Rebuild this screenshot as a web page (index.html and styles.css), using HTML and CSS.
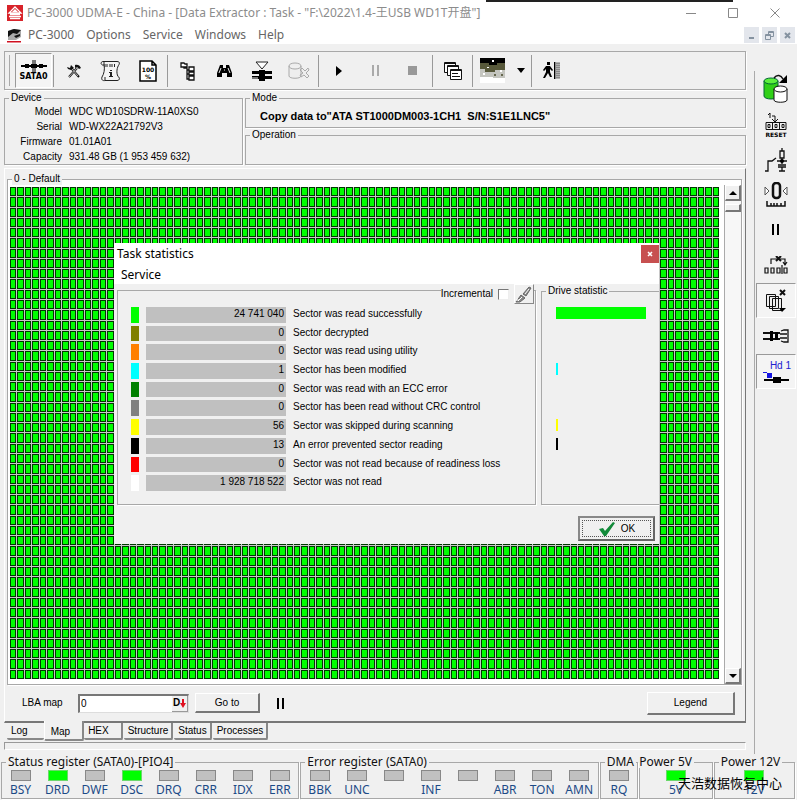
FILE: index.html
```html
<!DOCTYPE html>
<html lang="en">
<head>
    <meta charset="UTF-8">
    <meta name="viewport" content="width=device-width, initial-scale=1.0">
    <title>PC-3000 UDMA-E</title>
    <link rel="stylesheet" href="styles.css">
</head>
<body>
<div class="window">
  <header class="titlebar">
    <div class="behind"></div>
    <svg width="16" height="16" viewBox="0 0 16 16"><path fill="#d8232a" d="M0 0h16v16H0z"/><path d="M8 2l6 6H2zM3 9.500h10M2 11.500h12M3 13.500h10" fill="none" stroke="#fff" stroke-width="1.300"/><path d="M8 4l3 3H5z" fill="#fff"/></svg>
    <h1>PC-3000 UDMA-E - China - [Data Extractor : Task - "F:\2022\1.4-王USB WD1T开盘"]</h1>
    <div class="win-buttons">
      <button aria-label="Minimize"><svg width="10" height="10"><path d="M0 5.500h10"/></svg></button>
      <button aria-label="Maximize"><svg width="10" height="10"><path d="M.5.5h9v9h-9z"/></svg></button>
      <button aria-label="Close"><svg width="10" height="10"><path d="M.5.5l9 9M9.500.5l-9 9"/></svg></button>
    </div>
  </header>

  <nav class="menubar">
    <svg width="15" height="15" viewBox="0 0 15 15"><path fill="#aaa" d="M1 3l5-2 8 1v7l-5 3H1z"/><path d="M1 3l6-2 7 1-4 4-4-1-5 4zM7 8l6-2v2l-4 2z" fill="#111"/><path fill="#d01020" d="M0 13h14v1.500H0z"/></svg>
    <button>PC-3000</button>
    <button>Options</button>
    <button>Service</button>
    <button>Windows</button>
    <button>Help</button>
    <div class="mdi-buttons">
      <button aria-label="Minimize child"><svg width="9" height="9"><path d="M2 7h5"/></svg></button>
      <button aria-label="Restore child"><svg width="9" height="9"><path class="thin" d="M3.500 3V.5h5v5H6M3 1.500h5M.5 3.500h5v5h-5zM1 4.500h4"/></svg></button>
      <button aria-label="Close child"><svg width="9" height="9"><path d="M2 2l5 5M7 2L2 7"/></svg></button>
    </div>
  </nav>

  <div class="workspace">
    <main>
      <div class="toolbar">
        <button class="pressed sata" aria-label="SATA0"><svg width="26" height="12" viewBox="0 0 26 12"><path d="M0 5h26v2H0z"/><path d="M4 4h4v4H4zM18 4h4v4h-4z"/><path fill="#777" d="M11 0h4v12h-4z"/><path d="M10 4h6v4h-6z"/></svg><span>SATA0</span></button>
        <i class="sep"></i>
        <button aria-label="Tools"><svg width="16" height="16" viewBox="0 0 16 16"><path d="M3 14L11 5M13 14L5 5" stroke="#111" stroke-width="2"/><path d="M9 2c2-1 5 0 6 3l-2 1-2-2-2 1zM1 4l3 1 1-3 3 3-3 2-3-1z" fill="#111"/><path d="M3 14l8-9M12 13L6 6" stroke="#ddd" stroke-width=".8"/></svg></button>
        <button aria-label="Sector info"><svg width="22" height="22" viewBox="0 0 22 22"><path d="M4 1.500C1 1 0 4 2.500 5H4c1 4 0 9-2 12-1 3 1 4 3 3.500h12c3 0 3-3 1-4-2-4-1-9 1-12 1-2 0-3-2-3zM4 1.500v3.500M5 17v3" fill="#f4f4f4" stroke="#222"/><path d="M5 4v3M7 4v3M10 4v3M12 4v3M14.500 4v3" stroke="#222"/><path d="M10 10h2v1h-2zM9 12h3v4h1v1H9v-1h1v-3H9z" fill="#222"/></svg></button>
        <button aria-label="Progress"><svg width="18" height="22" viewBox="0 0 18 22"><path d="M1 1h12l4 4v16H1zM13 1v4h4" fill="#fff" stroke="#000" stroke-width="1.500"/><text x="9" y="12" class="svg-small">100</text><text x="9" y="19" class="svg-small">%</text></svg></button>
        <i class="sep"></i>
        <button aria-label="Folder tree"><svg width="16" height="20" viewBox="0 0 16 20"><path d="M1 2h3l1 1h2v3H1zM4 6v1h3v11h2M7 9h2M7 13h2M9 6h5v4H9zM9 11h5v3H9zM9 15h5v4H9z" fill="#fff" stroke="#111" stroke-width="1.300"/></svg></button>
        <button aria-label="Find"><svg width="15" height="14" viewBox="0 0 15 14"><path d="M3 1h3v3h3V1h3l3 8v4h-5V9H5v4H0V9z"/><path d="M4 4L2 9M11 4l2 5M7 6h1" stroke="#eee"/></svg></button>
        <button aria-label="Build map"><svg width="22" height="20" viewBox="0 0 22 20"><path d="M5 1h12l-6 7z" fill="#fff" stroke="#222"/><path d="M1 10h20v3H1zM1 15h20v3H1zM8 9h6v11H8z"/><path d="M1 13.500h7M14 13.500h7M1 17h6" stroke="#eee"/></svg></button>
        <button disabled aria-label="Remove drive"><svg width="22" height="18" viewBox="0 0 22 18"><path d="M1 4v10c0 3 12 3 12 0V4M1 4c0-4 12-4 12 0S1 8 1 4M14 6l3 3 3-3 1 2-3 3 3 3-2 2-3-3-3 2-1-2 3-2-3-3z" fill="#eee" stroke="#aaa"/></svg></button>
        <i class="sep"></i>
        <button aria-label="Start"><svg width="8" height="12"><path d="M1 1l6 5-6 5z"/></svg></button>
        <button disabled aria-label="Pause"><svg width="8" height="11"><path fill="#aaa" d="M0 0h2v11H0zM5 0h2v11H5z"/></svg></button>
        <button disabled aria-label="Stop"><svg width="9" height="9"><path fill="#999" d="M0 0h9v9H0z"/></svg></button>
        <i class="sep"></i>
        <button aria-label="Cascade windows"><svg width="20" height="20" viewBox="0 0 20 20"><g fill="#fff" stroke="#111"><path d="M1.500 1.500h11v10h-11z"/><path d="M1 2.500h12"/><path d="M4.500 4.500h11v10h-11z"/><path d="M4 5.500h12"/><path d="M7.500 8.500h11v10h-11z"/><path d="M7 9.500h12M9 12.500h6M9 15.500h8"/></g></svg></button>
        <i class="sep"></i>
        <button aria-label="Map view"><svg width="25" height="25" viewBox="0 0 25 25"><path d="M0 0h25v7H0z"/><path fill="#57583a" d="M0 5h9v2h8V5h8v9H0z"/><path fill="#c4c5bf" d="M0 11h5v3h10v-2h10v8H0z"/><path fill="#fff" d="M0 19h13v1h12v5H0zM12 2h2v2h-2zM7 9h2v1H7zM20 12h2v2h-2zM3 15h2v2H3z"/><path fill="#66674e" d="M14 16h2v2h-2zM21 16h2v2h-2z"/></svg></button>
        <button class="drop" aria-label="Map view options"><svg width="8" height="5"><path d="M0 0h8L4 5z"/></svg></button>
        <i class="sep"></i>
        <button aria-label="Exit"><svg width="18" height="18" viewBox="0 0 18 18"><path d="M4 0h3v3H4zM3 4h4l3 4-1 1-2-2v3l2 5H7l-2-4-3 5H0l3-6V7L1 9 0 8z"/><path fill="#888" d="M11 0h6v17h-6z"/><path d="M11.500 0v17" stroke="#000"/><path d="M14 0v17M16 0v17" stroke="#ddd" stroke-dasharray="1 1"/></svg></button>
      </div>

      <div class="info">
        <fieldset class="device">
          <legend>Device</legend>
          <dl>
            <dt>Model</dt><dd>WDC WD10SDRW-11A0XS0</dd>
            <dt>Serial</dt><dd>WD-WX22A21792V3</dd>
            <dt>Firmware</dt><dd>01.01A01</dd>
            <dt>Capacity</dt><dd>931.48 GB (1 953 459 632)</dd>
          </dl>
        </fieldset>
        <div class="info-right">
          <fieldset>
            <legend>Mode</legend>
            <p class="mode">Copy data to"ATA ST1000DM003-1CH1  S/N:S1E1LNC5"</p>
          </fieldset>
          <fieldset><legend>Operation</legend></fieldset>
        </div>
      </div>

      <section class="panel">
        <fieldset class="map-box">
          <legend>0 - Default</legend>
          <div class="map" id="map"></div>
          <div class="scrollbar">
            <button aria-label="Scroll up"><svg width="8" height="4"><path d="M4 0l4 4H0z"/></svg></button>
            <div class="thumb"></div>
            <button class="down" aria-label="Scroll down"><svg width="8" height="4"><path d="M0 0h8L4 4z"/></svg></button>
          </div>
        </fieldset>
        <div class="lba">
          <label for="lba">LBA map</label>
          <div class="lba-field">
            <input id="lba" type="text" value="0">
            <button aria-label="Decimal"><b>D</b><svg width="6" height="9"><path fill="#e01020" d="M2 0h2v4h2L3 9 0 4h2z"/></svg></button>
          </div>
          <button class="btn goto">Go to</button>
          <button class="pause" aria-label="Pause map"><svg width="8" height="11"><path d="M0 0h2v11H0zM5 0h2v11H5z"/></svg></button>
          <button class="btn legend-btn">Legend</button>
        </div>
      </section>

      <div class="tabs">
        <button>Log</button>
        <button class="active">Map</button>
        <button>HEX</button>
        <button>Structure</button>
        <button>Status</button>
        <button>Processes</button>
      </div>
      <div class="strip"></div>
    </main>

    <aside class="side">
      <button aria-label="Copy drive"><svg width="26" height="30" viewBox="0 0 26 30"><path d="M1 7v15c0 4 14 4 14 0V7" fill="#30d018" stroke="#063"/><ellipse cx="8" cy="7" rx="7" ry="3" fill="#5cf03c" stroke="#063"/><path d="M11 15v11c0 3 13 3 13 0V15" fill="#fff" stroke="#111"/><ellipse cx="17.500" cy="15" rx="6.500" ry="3" fill="#fff" stroke="#111"/><path d="M11 4c3-4 7-3 9 1" fill="none" stroke="#111" stroke-width="1.500"/><path d="M24 1v8h-8z"/></svg></button>
      <button aria-label="Reset"><svg width="22" height="26" viewBox="0 0 22 26"><path d="M3 3l2-2v5M7 4h3v5M7 7l3 3 3-3M1 10.500h20v7H1zM7.500 10v7M14.500 10v7" fill="none" stroke="#111"/><path d="M3 12.500h2v3H3zM10 12.500h2v3h-2zM17 12.500h2v3h-2z" fill="none" stroke="#111"/><text x="11" y="25" class="svg-small">RESET</text></svg></button>
      <button aria-label="Power"><svg width="24" height="24" viewBox="0 0 24 24"><path d="M1 23h3V13h4l4-3M13 13h10M18 0v3M16 3h4v7h-4zM18 10v6M14 17h8M14 19h8M18 19v4M15 23h6" fill="none" stroke="#111" stroke-width="1.300"/><circle cx="18" cy="13" r="2"/></svg></button>
      <button aria-label="Zero position"><svg width="24" height="26" viewBox="0 0 24 26"><rect x="9" y="1" width="7" height="15" rx="3" fill="none" stroke="#111" stroke-width="2.500"/><path d="M1 5l4 4-4 4zM23 5l-4 4 4 4z" fill="#fff" stroke="#555"/><path d="M3 19v5h18v-5M7 21v3M10 21v3M13 21v3M17 21v3" fill="none" stroke="#111" stroke-width="1.500"/></svg></button>
      <button aria-label="Pause task"><svg width="8" height="11"><path d="M0 0h2v11H0zM5 0h2v11H5z"/></svg></button>
      <button aria-label="Skip sectors"><svg width="24" height="18" viewBox="0 0 24 18"><path d="M7 8V3h14v5M19 6l2 3 2-3M1 12h3v5H1zM7 12h3v5H7zM13 12h3v5h-3zM20 12h3v5h-3zM18 9v9" fill="none" stroke="#111" stroke-width="1.200"/><path d="M12 0l5 5M17 0l-5 5" stroke="#111" stroke-width="2"/></svg></button>
      <button class="pressed" aria-label="Clear copies"><svg width="22" height="24" viewBox="0 0 22 24"><path d="M1.500 5.500h9v12h-9zM4.500 7.500h9v12h-9zM7.500 9.500h9v12h-9z" fill="#eee" stroke="#111"/><path d="M15 1l5 5M20 1l-5 5" stroke="#111" stroke-width="2"/><path d="M14 19h7l-4 4z"/></svg></button>
      <button aria-label="Connector"><svg width="26" height="14" viewBox="0 0 26 14"><path d="M0 4h17M0 10h17" stroke="#111" stroke-width="2"/><path d="M7 2h3v10H7zM12 3h3v8h-3z"/><path d="M17 5h7M17 9h7M18 2l3-1h4v12h-4l-3-1" fill="none" stroke="#111" stroke-width="1.300"/></svg></button>
      <button class="pressed hd" aria-label="Head 1"><span>Hd 1</span><svg width="26" height="12" viewBox="0 0 26 12"><path fill="#1414e0" d="M4 1h5v5H4zM0 0h4v1H0z"/><path d="M1 7h25v2H1zM10 5h8v6h-8z"/></svg></button>
    </aside>
  </div>

  <footer class="registers">
    <fieldset class="reg wide">
      <legend>Status register (SATA0)-[PIO4]</legend>
      <div><i></i>BSY</div><div><i class="on"></i>DRD</div><div><i></i>DWF</div><div><i class="on"></i>DSC</div>
      <div><i></i>DRQ</div><div><i></i>CRR</div><div><i></i>IDX</div><div><i></i>ERR</div>
    </fieldset>
    <fieldset class="reg wide">
      <legend>Error register (SATA0)</legend>
      <div><i></i>BBK</div><div><i></i>UNC</div><div><i></i></div><div><i></i>INF</div>
      <div><i></i></div><div><i></i>ABR</div><div><i></i>TON</div><div><i></i>AMN</div>
    </fieldset>
    <fieldset class="reg dma">
      <legend>DMA</legend>
      <div><i></i>RQ</div>
    </fieldset>
    <fieldset class="reg power5">
      <legend>Power 5V</legend>
      <div><i class="on"></i>5V</div>
    </fieldset>
    <fieldset class="reg power12">
      <legend>Power 12V</legend>
      <div><i class="on"></i>12V</div>
    </fieldset>
    <span class="watermark">天浩数据恢复中心</span>
  </footer>

  <!-- Task statistics dialog -->
  <div class="dialog" role="dialog" aria-labelledby="dlg-title">
    <div class="dialog-title">
      <h2 id="dlg-title">Task statistics</h2>
      <button aria-label="Close dialog"><svg width="6" height="6"><path d="M1 1l4 4M5 1L1 5" stroke="#fff" stroke-width="1.500"/></svg></button>
    </div>
    <div class="dialog-menu"><button>Service</button></div>
    <div class="dialog-body">
      <fieldset class="stats">
        <div class="incremental">
          <label for="inc">Incremental</label>
          <input id="inc" type="checkbox">
          <button aria-label="Clear statistics"><svg width="17" height="17" viewBox="0 0 17 17"><path d="M1 16l5-7 4 3-5 4zM8 8l6-7 2 1-5 8z" fill="#888" stroke="#666"/><path d="M3 15l4-4M10 8l4-5M1 14h3M5 17h3" stroke="#fff"/></svg></button>
        </div>
        <div class="row"><i class="lime"></i><output>24 741 040</output><span>Sector was read successfully</span></div>
        <div class="row"><i class="olive"></i><output>0</output><span>Sector decrypted</span></div>
        <div class="row"><i class="orange"></i><output>0</output><span>Sector was read using utility</span></div>
        <div class="row"><i class="cyan"></i><output>1</output><span>Sector has been modified</span></div>
        <div class="row"><i class="green"></i><output>0</output><span>Sector was read with an ECC error</span></div>
        <div class="row"><i class="gray"></i><output>0</output><span>Sector has been read without CRC control</span></div>
        <div class="row"><i class="yellow"></i><output>56</output><span>Sector was skipped during scanning</span></div>
        <div class="row"><i class="black"></i><output>13</output><span>An error prevented sector reading</span></div>
        <div class="row"><i class="red"></i><output>0</output><span>Sector was not read because of readiness loss</span></div>
        <div class="row"><i class="white"></i><output>1 928 718 522</output><span>Sector was not read</span></div>
      </fieldset>
      <fieldset class="drive">
        <legend>Drive statistic</legend>
        <div class="bars">
          <i class="lime" style="width:100%"></i><i></i><i></i><i class="cyan" style="width:2%"></i><i></i>
          <i></i><i class="yellow" style="width:2%"></i><i class="black" style="width:2%"></i><i></i><i></i>
        </div>
      </fieldset>
    </div>
    <div class="dialog-actions">
      <button class="ok"><svg width="18" height="16" viewBox="0 0 18 16"><path d="M1 8l4-1 2 3L15 1l2 1L8 15H6z" fill="#128a3a"/></svg>OK</button>
    </div>
  </div>
</div>
<script src="map.js"></script>
</body>
</html>
```

FILE: styles.css
```css
* { margin: 0; padding: 0; box-sizing: border-box; }

body {
    font-family: "Liberation Sans", Arial, "Noto Sans CJK SC", sans-serif;
    font-size: 10px;
    line-height: 12px;
    color: #000;
    background-color: #f0f0f0;
}

button, input { font: inherit; color: inherit; }
button { background: none; border: none; }
i { display: block; }
svg { flex: none; display: block; }

fieldset {
    min-width: 0;
    border: 1px solid #a8a8a8;
    box-shadow: 1px 1px 0 #fff;
}

legend {
    margin-left: 4px;
    padding: 0 2px;
}

.window {
    position: relative;
    display: flex;
    flex-direction: column;
    height: 100vh;
    overflow: hidden;
}

/* Title bar */
.titlebar {
    position: relative;
    display: flex;
    align-items: center;
    height: 26px;
    padding: 0 17px 0 7px;
    background-color: #fff;
    font-family: "Noto Sans", "Noto Sans CJK SC", sans-serif;
    color: #8c8c8c;
}

.titlebar h1 {
    margin-left: 4px;
    font-size: 12px;
    font-weight: normal;
    white-space: nowrap;
}

.behind {
    position: absolute;
    top: 0;
    left: 61%;
    width: 31%;
    height: 2px;
    background-color: #222;
}

.win-buttons { display: flex; gap: 32px; margin-left: auto; }
.win-buttons path { fill: none; stroke: #888; }

/* Menu */
.menubar {
    display: flex;
    align-items: center;
    gap: 12px;
    height: 18px;
    padding: 0 2px 0 7px;
    background-color: #fff;
    font-family: "Noto Sans", sans-serif;
    font-size: 12px;
    color: #666;
}

.menubar > svg { margin-right: -6px; }
.mdi-buttons { display: flex; gap: 3px; margin-left: auto; }

.mdi-buttons button {
    display: grid;
    place-items: center;
    width: 15px;
    height: 16px;
    background-color: #e3e6ec;
}

.mdi-buttons path { fill: none; stroke: #8592a0; stroke-width: 2; }
.mdi-buttons .thin { stroke-width: 1; }

.workspace { flex: 1; display: flex; min-height: 0; }

main {
    flex: 1;
    display: flex;
    flex-direction: column;
    min-width: 0;
    padding: 7px 8px 0 4px;
}

/* Toolbar */
.toolbar {
    display: flex;
    align-items: center;
    height: 39px;
    padding-left: 10px;
    border: 1px solid #a8a8a8;
    box-shadow: 1px 1px 0 #fff;
    position: relative;
}

.toolbar::before {
    content: "";
    position: absolute;
    left: 4px;
    top: 3px;
    bottom: 3px;
    border-left: 1px solid #aaa;
}

.toolbar button {
    display: flex;
    flex-direction: column;
    align-items: center;
    justify-content: center;
    width: 37px;
    height: 35px;
}

.toolbar .drop { width: 19px; }

.sep {
    width: 1px;
    height: 32px;
    margin: 0 1px;
    background-color: #999;
}

.toolbar .pressed, .side .pressed {
    background-color: #f4f4f4;
    border: 1px solid;
    border-color: #999 #fff #fff #999;
}

.sata span {
    font-family: "DejaVu Sans", sans-serif;
    font-size: 8px;
    line-height: 10px;
    font-weight: bold;
}

.svg-small {
    font-family: "DejaVu Sans", sans-serif;
    font-size: 6px;
    font-weight: bold;
    text-anchor: middle;
}

/* Device info */
.info { display: flex; gap: 2px; height: 73px; margin-top: 2px; }
.device { flex: 0 0 239px; }

.device dl {
    display: grid;
    grid-template-columns: 57px 1fr;
    column-gap: 7px;
    line-height: 15px;
}

.device dt { text-align: right; }

.info-right {
    flex: 1;
    display: grid;
    grid-template-rows: 1fr 1fr;
    gap: 1px;
}

.mode {
    padding: 6px 0 0 14px;
    font-size: 11px;
    font-weight: bold;
    white-space: pre;
}

/* Map panel */
.panel {
    flex: 1;
    display: flex;
    flex-direction: column;
    min-height: 0;
    margin-top: 3px;
    padding: 4px 3px 0 2px;
    border: 1px solid;
    border-color: #fff #777 #777 #fff;
    border-bottom-width: 2px;
}

.map-box {
    flex: 1;
    display: flex;
    gap: 5px;
    min-height: 0;
    background-color: #fff;
}

.map-box legend {
    background-color: #f0f0f0;
}

.map {
    flex: 1;
    display: grid;
    grid-template-columns: repeat(95, 1fr);
    grid-template-rows: repeat(48, 1fr);
    gap: 1px;
    margin: 2px 0 5px 2px;
    background-color: #c8c8c8;
}

.map i {
    background-color: #00ff00;
    border: 1px solid #003800;
}

.scrollbar {
    display: flex;
    flex-direction: column;
    width: 17px;
    background-color: #f7f7f7;
    border-left: 1px solid #aaa;
}

.scrollbar button, .thumb {
    display: grid;
    place-items: center;
    height: 16px;
    background-color: #f0f0f0;
    border: 1px solid;
    border-color: #fff #777 #777 #fff;
    border-right-width: 2px;
    border-bottom-width: 2px;
}

.scrollbar .thumb { height: 8px; margin-top: 3px; }
.scrollbar .down { margin-top: auto; }

.lba {
    display: flex;
    align-items: center;
    height: 36px;
    padding: 0 7px 0 15px;
}

.lba label { width: 40px; white-space: nowrap; }

.lba-field {
    display: flex;
    width: 111px;
    height: 19px;
    margin: 0 6px 0 16px;
    background-color: #fff;
    border: 1px solid;
    border-color: #777 #ddd #ddd #777;
    border-width: 2px 1px 1px 2px;
}

.lba-field input {
    flex: 1;
    min-width: 0;
    padding-left: 1px;
    border: none;
    background: none;
    outline: none;
}

.lba-field button {
    display: flex;
    align-items: center;
    width: 16px;
    padding-left: 1px;
    background-color: #f0f0f0;
    border: 1px solid #999;
    border-width: 0 1px 1px 0;
}

.btn {
    height: 20px;
    background-color: #f0f0f0;
    border: 1px solid;
    border-color: #fff #777 #777 #fff;
    border-right-width: 2px;
    border-bottom-width: 2px;
}

.goto { width: 65px; }
.pause { margin-left: 17px; }
.legend-btn { width: 88px; height: 23px; margin-left: auto; }

/* Tabs */
.tabs {
    display: flex;
    gap: 1px;
    height: 19px;
    padding-left: 3px;
}

.tabs button {
    height: 17px;
    padding: 0 3px 0 4px;
    border-right: 2px solid #888;
    border-bottom: 2px solid #888;
    border-radius: 0 0 2px 2px;
}

.tabs button:first-child { padding-right: 16px; border-right: none; }

.tabs .active {
    height: 20px;
    margin: -2px -1px 0 -1px;
    padding: 4px 12px 0 6px;
    border-left: 1px solid #fff;
    background-color: #f0f0f0;
}

.tabs button:nth-child(3) { padding-right: 12px; }

.strip {
    height: 8px;
    margin-bottom: 6px;
    border: 1px solid;
    border-color: #999 #fff #fff #999;
}

/* Right toolbar */
.side {
    flex: 0 0 43px;
    margin: 27px 0 2px;
    border-left: 1px solid #aaa;
    padding-left: 1px;
}

.side button {
    display: flex;
    flex-direction: column;
    align-items: center;
    justify-content: center;
    width: 40px;
    height: 35px;
}

.side button:first-child { height: 36px; }
.side .pressed { margin-top: 1px; }

.hd span { align-self: flex-end; padding-right: 4px; color: #2020d0; }

/* Registers */
.registers {
    position: relative;
    display: flex;
    gap: 1px;
    height: 44px;
    padding: 0 2px 1px 1px;
    font-family: "Noto Sans", sans-serif;
    font-size: 12px;
}

.reg {
    display: flex;
    color: #1c4a86;
}

.reg legend { color: #111; line-height: 12px; white-space: nowrap; }

.reg div {
    flex: 1 0 0;
    display: flex;
    flex-direction: column;
    align-items: center;
    gap: 2px;
    min-width: 0;
    padding-top: 2px;
    line-height: 14px;
}

.reg i {
    width: 20px;
    height: 11px;
    background-color: #c0c0c0;
    border: 1px solid #888;
}

.reg .on { background-color: #00ff00; border-color: #6bd86b; }

.wide { flex: 299 0 0; }
.dma { flex: 37 0 0; }
.power5 { flex: 72 0 0; }
.power12 { flex: 80 0 0; }
.power5 legend { margin-left: -3px; }

.watermark {
    position: absolute;
    right: 15px;
    bottom: 8px;
    font-family: "Noto Sans CJK SC", sans-serif;
    font-size: 13px;
    line-height: 18px;
    color: #000;
}

/* Dialog */
.dialog {
    position: absolute;
    left: 114px;
    top: 243px;
    width: 545px;
    overflow: hidden;
    background-color: #f0f0f0;
}

.dialog-title, .dialog-menu {
    display: flex;
    align-items: center;
    background-color: #fff;
    font-family: "Noto Sans", sans-serif;
    font-size: 12px;
}

.dialog-title { height: 22px; padding-left: 3px; }
.dialog-title h2 { font-size: 12px; font-weight: normal; }

.dialog-title button {
    display: grid;
    place-items: center;
    width: 18px;
    height: 18px;
    margin-left: auto;
    background-color: #c75050;
}

.dialog-menu { height: 19px; padding-left: 7px; }

.dialog-body {
    display: flex;
    gap: 5px;
    height: 221px;
    padding: 0 0 0 3px;
}

.stats {
    position: relative;
    flex: 0 0 419px;
    display: grid;
    grid-template-rows: repeat(10, 1fr);
    row-gap: 3px;
    margin-top: 6px;
    padding: 16px 0 13px 13px;
}

.row {
    display: grid;
    grid-template-columns: 8px 140px 1fr;
    column-gap: 7px;
    min-height: 0;
    line-height: 14px;
}

.row output {
    padding-right: 2px;
    background-color: #c0c0c0;
    text-align: right;
}

.incremental {
    position: absolute;
    right: 1px;
    top: -7px;
    display: flex;
    align-items: center;
    gap: 5px;
    background-color: #f0f0f0;
}

.incremental input {
    appearance: none;
    width: 11px;
    height: 11px;
    background-color: #fff;
    border: 1px solid;
    border-color: #777 #eee #eee #777;
}

.incremental button {
    width: 20px;
    height: 20px;
    border: 1px solid;
    border-color: #fff #888 #888 #fff;
}

.drive {
    flex: 1;
    margin-top: 1px;
    border-right: none;
}

.bars {
    display: grid;
    grid-template-rows: repeat(10, 1fr);
    row-gap: 3px;
    width: 90px;
    height: 184px;
    margin: 10px 0 0 14px;
}

.bars i { height: 12px; }

.lime { background-color: #00ff00; }
.olive { background-color: #808000; }
.orange { background-color: #ff8000; }
.cyan { background-color: #00ffff; }
.green { background-color: #008000; }
.gray { background-color: #808080; }
.yellow { background-color: #ffff00; }
.black { background-color: #000; }
.red { background-color: #ff0000; }
.white { background-color: #fff; }

.dialog-actions {
    display: flex;
    justify-content: flex-end;
    padding: 11px 4px 3px;
}

.ok {
    display: flex;
    align-items: center;
    justify-content: center;
    gap: 5px;
    width: 77px;
    height: 25px;
    border: 2px solid;
    border-color: #888 #666 #666 #888;
    outline: 1px dotted #555;
    outline-offset: -5px;
}
```

FILE: map.js
```js
const COLS = 95;
const ROWS = 48;
const map = document.getElementById('map');

// Every cell is one block of read sectors
for (let i = 0; i < COLS * ROWS; i++) {
    map.appendChild(document.createElement('i'));
}
```
